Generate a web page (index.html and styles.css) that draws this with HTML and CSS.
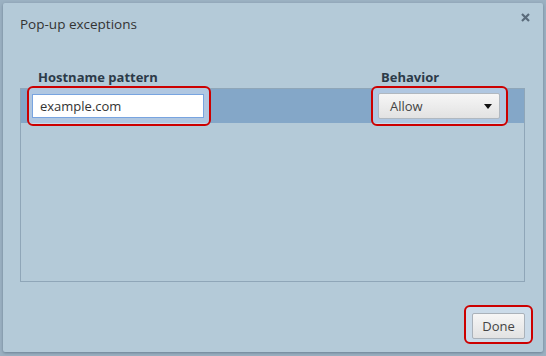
FILE: index.html
```html
<!DOCTYPE html>
<html>
<head>
    <meta charset="utf-8"/>
    <title>Pop-up exceptions</title>
    <link rel="stylesheet" href="styles.css">
</head>
<body>
<div class="overlay">
    <div class="dialog">
        <div class="title-bar">
            <h1 class="title">Pop-up exceptions</h1>
            <svg class="close" width="9" height="9" viewBox="0 0 9 9">
                <path d="M1 1 L8 8 M8 1 L1 8" stroke="#5a6b7b" stroke-width="2.2"/>
            </svg>
        </div>
        <div class="columns">
            <div class="col-host">Hostname pattern</div>
            <div class="col-behavior">Behavior</div>
        </div>
        <div class="list">
            <div class="row">
                <div class="col-host">
                    <span class="mark mark-input">
                        <input class="host-input" type="text" value="example.com">
                    </span>
                </div>
                <div class="col-behavior">
                    <span class="mark mark-select">
                        <span class="select">Allow<span class="arrow"></span></span>
                    </span>
                </div>
            </div>
        </div>
        <div class="buttons">
            <span class="mark mark-button">
                <button class="done">Done</button>
            </span>
        </div>
    </div>
</div>
</body>
</html>
```
FILE: styles.css
```css
html, body, div, span, h1, button, input {
    margin: 0;
    padding: 0;
}

body {
    background: #9bb1c2;
    font: 13px "Open Sans", "DejaVu Sans", sans-serif;
    color: #333;
    width: 546px;
    height: 356px;
    overflow: hidden;
}

.overlay {
    padding: 3px;
}

.dialog {
    background: #b4cad8;
    width: 540px;
    height: 349px;
    border-radius: 2px;
    box-shadow: 0 1px 3px rgba(60, 80, 100, 0.5);
    box-sizing: border-box;
    padding: 0 17px 0 17px;
    display: flex;
    flex-direction: column;
}

.title-bar {
    display: flex;
    justify-content: space-between;
    height: 41px;
}

.title {
    font-size: 13.5px;
    font-weight: normal;
    color: #333;
    padding-top: 12px;
}

.close {
    margin-top: 10px;
    margin-right: -4px;
}

.columns {
    display: grid;
    grid-template-columns: 358px 1fr;
    font-weight: bold;
    color: #2c3a48;
    height: 44px;
    align-items: end;
    padding-bottom: 2px;
    box-sizing: border-box;
}

.columns .col-host {
    padding-left: 18px;
}

.columns .col-behavior {
    padding-left: 3px;
}

.list {
    border: 1px solid #8fa6b8;
    width: 505px;
    height: 194px;
    box-sizing: border-box;
}

.row {
    display: grid;
    grid-template-columns: 357px 1fr;
    background: #84a7c8;
    height: 34px;
    align-items: center;
}

.row .col-host {
    padding-left: 11px;
}

.mark {
    position: relative;
    display: inline-block;
}

.mark::after {
    content: "";
    position: absolute;
    border: 2px solid #cc0000;
    border-radius: 6px;
    background: rgba(230, 240, 255, 0.45);
    z-index: 0;
}

.mark-input::after {
    left: -5px;
    right: -7px;
    top: -8px;
    bottom: -8px;
}

.mark-select::after {
    left: -7px;
    right: -8px;
    top: -7px;
    bottom: -7px;
}

.mark-button::after {
    left: -8px;
    right: -8px;
    top: -8px;
    bottom: -5px;
}

.host-input,
.select,
.done {
    position: relative;
    z-index: 1;
}

.host-input {
    display: block;
    width: 172px;
    height: 24px;
    box-sizing: border-box;
    border: 1px solid #78a4e0;
    background: #fff;
    font: 13px "Open Sans", "DejaVu Sans", sans-serif;
    color: #333;
    padding: 0 7px;
    outline: none;
}

.select {
    display: flex;
    align-items: center;
    justify-content: space-between;
    width: 122px;
    height: 26px;
    box-sizing: border-box;
    border: 1px solid #b0b8c0;
    border-radius: 2px;
    background: linear-gradient(#f6f6f6, #e2e2e2);
    padding: 0 7px 0 11px;
    color: #444;
}

.arrow {
    width: 0;
    height: 0;
    border-left: 4.5px solid transparent;
    border-right: 4.5px solid transparent;
    border-top: 5px solid #111;
}

.buttons {
    margin-top: auto;
    display: flex;
    justify-content: flex-end;
    padding: 0 1px 13px 0;
}

.done {
    display: block;
    width: 53px;
    height: 26px;
    border: 1px solid #aab2ba;
    border-radius: 2px;
    background: linear-gradient(#f6f6f6, #e2e2e2);
    font: 13px "Open Sans", "DejaVu Sans", sans-serif;
    color: #444;
}
```
